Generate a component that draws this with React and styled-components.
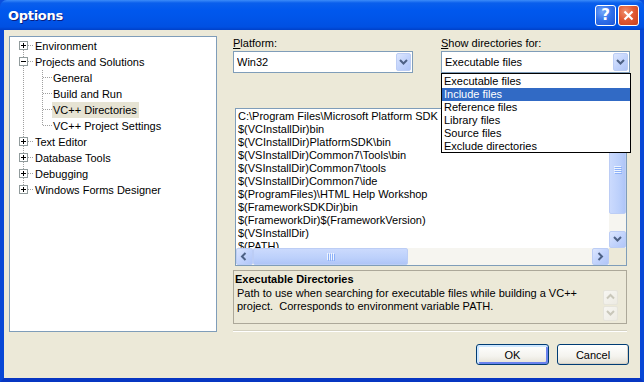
import React from 'react';
import styled, { createGlobalStyle } from 'styled-components';

const Global = createGlobalStyle`
  html, body { margin: 0; padding: 0; background: #fff; }
  body { font-family: "Liberation Sans", Arial, sans-serif; font-size: 11px; color: #000; }
  * { box-sizing: border-box; }
`;

const Window = styled.div`
  width: 644px;
  height: 382px;
  display: flex;
  flex-direction: column;
  overflow: hidden;
  background: #0A4FDD;
`;

const TitleBar = styled.div`
  height: 30px;
  flex: none;
  display: flex;
  align-items: center;
  padding: 0 5px 0 8px;
  border-radius: 7px 7px 0 0;
  background: linear-gradient(180deg, #3C8CF9 0px, #0A5FEC 3px, #0058EE 10px, #0054E8 20px, #0050E2 27px, #0040C8 30px);
`;

const Title = styled.div`
  flex: 1;
  color: #fff;
  font-family: "DejaVu Sans", "Liberation Sans", sans-serif;
  font-weight: bold;
  font-size: 13px;
  letter-spacing: -0.3px;
  text-shadow: 1px 1px 0 #0A1E80;
`;

const CapButton = styled.div`
  width: 21px;
  height: 21px;
  margin-left: 2px;
  border: 1px solid #fff;
  border-radius: 3px;
  display: flex;
  align-items: center;
  justify-content: center;
  color: #fff;
  font-weight: bold;
  font-size: 15px;
  font-family: "DejaVu Sans", sans-serif;
  background: ${p => p.$red
    ? 'radial-gradient(circle at 35% 30%, #F0906E 0%, #E15A34 45%, #C8401C 100%)'
    : 'radial-gradient(circle at 35% 30%, #73A6FA 0%, #2F6FEA 50%, #1E56D6 100%)'};
`;

const Frame = styled.div`
  flex: 1;
  display: flex;
  border-left: 4px solid #0847D6;
  border-right: 4px solid #0847D6;
  border-bottom: 4px solid #0736C2;
  background: #ECE9D8;
  padding: 6px 0 0 5px;
`;

const Tree = styled.div`
  width: 208px;
  height: 296px;
  flex: none;
  background: #fff;
  border: 1px solid #7F9DB9;
  padding-top: 1px;
`;

const TreeRow = styled.div`
  height: 16px;
  display: flex;
  align-items: center;
`;

const TreeLabel = styled.span`
  height: 16px;
  line-height: 16px;
  padding: 0 2px 0 1px;
  white-space: nowrap;
  background: ${p => (p.$selected ? '#E6E3D3' : 'transparent')};
`;

const Right = styled.div`
  width: 396px;
  margin-left: 16px;
  display: flex;
  flex-direction: column;
  padding-top: 1px;
`;

const Fields = styled.div`
  display: grid;
  grid-template-columns: 180px 189px;
  column-gap: 28px;
`;

const Field = styled.div`
  position: relative;
  display: flex;
  flex-direction: column;
`;

const Label = styled.div`
  height: 13px;
  line-height: 13px;
  margin-bottom: 1px;
  u { text-decoration: underline; }
`;

const Combo = styled.div`
  height: 22px;
  border: 1px solid #7F9DB9;
  background: #fff;
  display: flex;
  align-items: center;
  padding: 1px 1px 1px 3px;
`;

const ComboText = styled.div`
  flex: 1;
  line-height: 18px;
  white-space: nowrap;
  overflow: hidden;
`;

const ArrowBtn = styled.div`
  width: ${p => p.$w || 15}px;
  height: ${p => p.$h || 18}px;
  flex: none;
  display: flex;
  align-items: center;
  justify-content: center;
  border-radius: 2px;
  border: 1px solid ${p => (p.$disabled ? '#E6E4DB' : '#BCCDF5')};
  background: ${p => (p.$disabled
    ? 'linear-gradient(135deg, #F7F6F2, #EDEBE3)'
    : 'linear-gradient(135deg, #DCE6FE 0%, #C3D4FC 50%, #B1C6F8 100%)')};
`;

const DropList = styled.div`
  position: absolute;
  top: 36px;
  left: 0;
  width: 190px;
  height: 80px;
  background: #fff;
  border: 1px solid #000;
  padding-top: 1px;
  z-index: 5;
`;

const DropItem = styled.div`
  height: 13px;
  line-height: 13px;
  padding-left: 2px;
  white-space: nowrap;
  color: ${p => (p.$active ? '#fff' : '#000')};
  background: ${p => (p.$active ? '#316AC5' : 'transparent')};
`;

const ListBox = styled.div`
  width: 392px;
  height: 158px;
  margin: 35px 0 0 2px;
  border: 1px solid #7F9DB9;
  background: #fff;
  display: grid;
  grid-template-columns: 1fr 17px;
  grid-template-rows: 1fr 17px;
`;

const ListText = styled.div`
  overflow: hidden;
  padding: 1px 0 0 2px;
  line-height: 13px;
  white-space: nowrap;
`;

const VScroll = styled.div`
  display: flex;
  flex-direction: column;
  background: #F6F5F0;
`;

const HScroll = styled.div`
  display: flex;
  background: #F6F5F0;
`;

const Corner = styled.div`
  background: #ECE9D8;
`;

const Thumb = styled.div`
  ${p => (p.$vertical ? 'height: 88px; width: 17px;' : 'width: 155px; height: 17px;')}
  border: 1px solid #BCCDF5;
  border-radius: 2px;
  background: ${p => (p.$vertical
    ? 'linear-gradient(90deg, #CBDAFD, #BCD0FB 60%, #AFC5F7)'
    : 'linear-gradient(180deg, #CBDAFD, #BCD0FB 60%, #AFC5F7)')};
  display: flex;
  align-items: center;
  justify-content: center;
`;

const Track = styled.div`
  flex: 1;
`;

const Desc = styled.div`
  width: 394px;
  height: 54px;
  margin-top: 4px;
  border: 1px solid #ACA899;
  display: flex;
  padding: 2px 1px 0 1px;
`;

const DescText = styled.div`
  flex: 1;
  line-height: 13px;
  white-space: pre;
`;

const DescTitle = styled.div`
  font-weight: bold;
  margin-bottom: 1px;
`;

const DescBody = styled.div`
  padding-left: 2px;
`;

const DescArrows = styled.div`
  display: flex;
  flex-direction: column;
  gap: 1px;
  padding: 17px 7px 0 0;
`;

const Separator = styled.div`
  width: 394px;
  margin-top: 6px;
  border-top: 1px solid #D5D2C2;
  border-bottom: 1px solid #fff;
`;

const Buttons = styled.div`
  display: flex;
  justify-content: flex-end;
  gap: 8px;
  width: 396px;
  margin-top: 12px;
`;

const Button = styled.div`
  width: ${p => p.$w}px;
  height: 21px;
  border: 1px solid #003C74;
  border-radius: 3px;
  display: flex;
  align-items: center;
  justify-content: center;
  background: linear-gradient(180deg, #FFFFFF 0%, #F4F3EE 60%, #E3E0D4 100%);
  box-shadow: ${p => (p.$default
    ? 'inset 1px 1px 0 1px #CEE7FF, inset -1px -1px 0 1px #6982EE'
    : 'inset -1px -1px 0 0 #D6D0C5')};
`;

const Chevron = ({ dir = 'down', color = '#4D6185' }) => {
  const d = {
    down: 'M1 2 L4.5 5.5 L8 2',
    up: 'M1 5.5 L4.5 2 L8 5.5',
    left: 'M5.5 1 L2 4.5 L5.5 8',
    right: 'M2.5 1 L6 4.5 L2.5 8',
  }[dir];
  return (
    <svg width="9" height="9" viewBox="0 0 9 9">
      <path d={d} fill="none" stroke={color} strokeWidth="2" />
    </svg>
  );
};

const Grip = ({ vertical }) => (
  <svg width={8} height={8} viewBox="0 0 8 8" shapeRendering="crispEdges">
    {[0, 2, 4, 6].map(i =>
      vertical
        ? <rect key={i} x="0" y={i} width="7" height="1" fill="#EEF4FE" />
        : <rect key={i} x={i} y="0" width="1" height="7" fill="#EEF4FE" />
    )}
    {[0, 2, 4, 6].map(i =>
      vertical
        ? <rect key={'s' + i} x="1" y={i + 1} width="7" height="1" fill="#8CB0F8" />
        : <rect key={'s' + i} x={i + 1} y="1" width="1" height="7" fill="#8CB0F8" />
    )}
  </svg>
);

const dotted = { stroke: '#A0A0A0', strokeDasharray: '1 1', strokeWidth: 1 };

const Expander = ({ open }) => (
  <g shapeRendering="crispEdges">
    <rect x="9.5" y="3.5" width="8" height="8" fill="#fff" stroke="#919B9C" />
    <rect x="11" y="7" width="5" height="1" fill="#000" />
    {!open && <rect x="13" y="5" width="1" height="5" fill="#000" />}
  </g>
);

const RootLines = ({ first, last, open }) => (
  <svg width="24" height="16" viewBox="0 0 24 16" shapeRendering="crispEdges">
    {!first && <line x1="13.5" y1="0" x2="13.5" y2="3" {...dotted} />}
    {!last && <line x1="13.5" y1="12" x2="13.5" y2="16" {...dotted} />}
    <line x1="18" y1="7.5" x2="24" y2="7.5" {...dotted} />
    <Expander open={open} />
  </svg>
);

const ChildLines = ({ last }) => (
  <svg width="42" height="16" viewBox="0 0 42 16" shapeRendering="crispEdges">
    <line x1="13.5" y1="0" x2="13.5" y2="16" {...dotted} />
    <line x1="32.5" y1="0" x2="32.5" y2={last ? 8 : 16} {...dotted} />
    <line x1="33" y1="7.5" x2="42" y2="7.5" {...dotted} />
  </svg>
);

const tree = [
  { label: 'Environment', first: true },
  {
    label: 'Projects and Solutions', open: true,
    children: ['General', 'Build and Run', 'VC++ Directories', 'VC++ Project Settings'],
  },
  { label: 'Text Editor' },
  { label: 'Database Tools' },
  { label: 'Debugging' },
  { label: 'Windows Forms Designer', last: true },
];

const dirs = [
  'C:\\Program Files\\Microsoft Platform SDK for Windows Server 2003 R2\\Bin',
  '$(VCInstallDir)bin',
  '$(VCInstallDir)PlatformSDK\\bin',
  '$(VSInstallDir)Common7\\Tools\\bin',
  '$(VSInstallDir)Common7\\tools',
  '$(VSInstallDir)Common7\\ide',
  '$(ProgramFiles)\\HTML Help Workshop',
  '$(FrameworkSDKDir)bin',
  '$(FrameworkDir)$(FrameworkVersion)',
  '$(VSInstallDir)',
  '$(PATH)',
];

const kinds = [
  'Executable files',
  'Include files',
  'Reference files',
  'Library files',
  'Source files',
  'Exclude directories',
];

export default function App() {
  return (
    <>
      <Global />
      <Window>
        <TitleBar>
          <Title>Options</Title>
          <CapButton>?</CapButton>
          <CapButton $red>
            <svg width="11" height="11" viewBox="0 0 11 11">
              <path d="M1.5 1.5 L9.5 9.5 M9.5 1.5 L1.5 9.5" stroke="#fff" strokeWidth="2.2" />
            </svg>
          </CapButton>
        </TitleBar>
        <Frame>
          <Tree>
            {tree.map(node => (
              <React.Fragment key={node.label}>
                <TreeRow>
                  <RootLines first={node.first} last={node.last} open={node.open} />
                  <TreeLabel>{node.label}</TreeLabel>
                </TreeRow>
                {node.children && node.children.map((c, i) => (
                  <TreeRow key={c}>
                    <ChildLines last={i === node.children.length - 1} />
                    <TreeLabel $selected={c === 'VC++ Directories'}>{c}</TreeLabel>
                  </TreeRow>
                ))}
              </React.Fragment>
            ))}
          </Tree>
          <Right>
            <Fields>
              <Field>
                <Label><u>P</u>latform:</Label>
                <Combo>
                  <ComboText>Win32</ComboText>
                  <ArrowBtn><Chevron /></ArrowBtn>
                </Combo>
              </Field>
              <Field>
                <Label><u>S</u>how directories for:</Label>
                <Combo>
                  <ComboText>Executable files</ComboText>
                  <ArrowBtn><Chevron /></ArrowBtn>
                </Combo>
                <DropList>
                  {kinds.map(k => (
                    <DropItem key={k} $active={k === 'Include files'}>{k}</DropItem>
                  ))}
                </DropList>
              </Field>
            </Fields>
            <ListBox>
              <ListText>
                {dirs.map(d => <div key={d}>{d}</div>)}
              </ListText>
              <VScroll>
                <ArrowBtn $w={17} $h={17}><Chevron dir="up" /></ArrowBtn>
                <Thumb $vertical><Grip vertical /></Thumb>
                <Track />
                <ArrowBtn $w={17} $h={17}><Chevron dir="down" /></ArrowBtn>
              </VScroll>
              <HScroll>
                <ArrowBtn $w={17} $h={17}><Chevron dir="left" /></ArrowBtn>
                <Thumb><Grip /></Thumb>
                <Track />
                <ArrowBtn $w={17} $h={17}><Chevron dir="right" /></ArrowBtn>
              </HScroll>
              <Corner />
            </ListBox>
            <Desc>
              <DescText>
                <DescTitle>Executable Directories</DescTitle>
                <DescBody>
                  {'Path to use when searching for executable files while building a VC++\nproject.  Corresponds to environment variable PATH.'}
                </DescBody>
              </DescText>
              <DescArrows>
                <ArrowBtn $w={15} $h={15} $disabled><Chevron dir="up" color="#C9C7BA" /></ArrowBtn>
                <ArrowBtn $w={15} $h={15} $disabled><Chevron dir="down" color="#C9C7BA" /></ArrowBtn>
              </DescArrows>
            </Desc>
            <Separator />
            <Buttons>
              <Button $w={73} $default>OK</Button>
              <Button $w={72}>Cancel</Button>
            </Buttons>
          </Right>
        </Frame>
      </Window>
    </>
  );
}
